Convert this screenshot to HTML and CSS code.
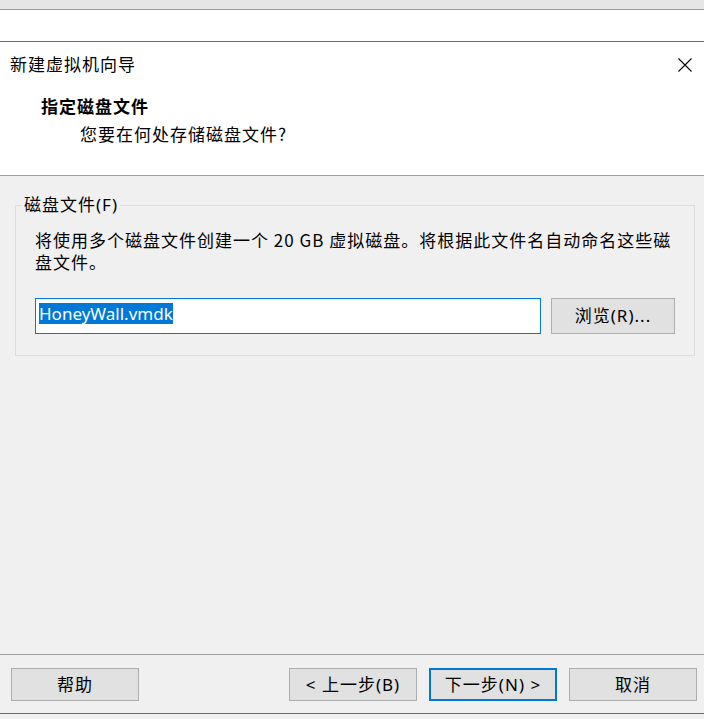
FILE: index.html
```html
<!DOCTYPE html>
<html lang="zh-CN">
<head>
<meta charset="utf-8">
<title>新建虚拟机向导</title>
<link rel="stylesheet" href="styles.css">
</head>
<body>
<div class="topbar"></div>
<div class="blank"></div>
<div class="header">
  <div class="title-row">
    <span class="title cjk">新建虚拟机向导</span>
    <svg class="close" width="14" height="14" viewBox="0 0 14 14"><path d="M0.5 0.5 L13.5 13.5 M13.5 0.5 L0.5 13.5" stroke="#000" stroke-width="1.1" fill="none"/></svg>
  </div>
  <div class="heading cjk">指定磁盘文件</div>
  <div class="subheading cjk">您要在何处存储磁盘文件?</div>
</div>
<div class="body">
  <fieldset class="group">
    <legend class="legend cjk">磁盘文件(F)</legend>
    <p class="desc cjk">将使用多个磁盘文件创建一个 20 GB 虚拟磁盘。将根据此文件名自动命名这些磁盘文件。</p>
    <div class="file-row">
      <div class="input"><span class="sel">HoneyWall.vmdk</span></div>
      <div class="btn browse cjk">浏览(R)...</div>
    </div>
  </fieldset>
</div>
<div class="footer">
  <div class="btn cjk">帮助</div>
  <div class="spacer"></div>
  <div class="btn cjk">&lt; 上一步(B)</div>
  <div class="btn primary cjk">下一步(N) &gt;</div>
  <div class="btn cjk">取消</div>
</div>
<div class="bottom"></div>
</body>
</html>
```

FILE: styles.css
```css
* { box-sizing: border-box; }
html, body { margin: 0; padding: 0; }
body {
  width: 704px;
  height: 719px;
  overflow: hidden;
  background: #f0f0f0;
  font-family: "Noto Sans", "Noto Sans CJK SC", sans-serif;
  font-size: 17px;
  color: #000;
  display: flex;
  flex-direction: column;
}
.cjk { letter-spacing: 1px; }
.topbar {
  height: 10px;
  background: #e6e6e6;
  border-bottom: 1px solid #78a4c6;
}
.blank {
  height: 32px;
  background: #fff;
  border-bottom: 1px solid #6a6a6a;
}
.header {
  height: 134px;
  background: #fff;
  border-bottom: 1px solid #a0a0a0;
  display: flex;
  flex-direction: column;
}
.title-row {
  display: flex;
  align-items: center;
  justify-content: space-between;
  padding: 11px 12px 0 10px;
  height: 33px;
}
.title { line-height: 22px; font-family: "Noto Sans CJK SC", sans-serif; }
.close { display: block; margin-top: 1px; }
.heading {
  margin: 20px 0 0 41px;
  font-weight: bold;
  line-height: 22px;
  font-family: "Noto Sans CJK SC", sans-serif;
}
.subheading {
  margin: 6px 0 0 80px;
  line-height: 22px;
  font-family: "Noto Sans CJK SC", sans-serif;
}
.body {
  flex: 0 0 479px;
  border-bottom: 1px solid #a0a0a0;
  padding: 18px 10px 0 15px;
}
.group {
  margin: 0;
  width: 680px;
  border: 1px solid #dcdcdc;
  padding: 13px 19px 21px 19px;
}
.legend {
  padding: 0 2px;
  margin-left: -13px;
  line-height: 22px;
}
.desc {
  margin: 0;
  line-height: 22px;
  font-family: "Noto Sans CJK SC", sans-serif;
}
.file-row {
  margin-top: 25px;
  display: flex;
  gap: 10px;
}
.input {
  flex: 0 0 506px;
  height: 36px;
  background: #fff;
  border: 1px solid #0078d7;
  padding: 3px 0 0 3px;
}
.sel {
  display: inline-block;
  background: #0078d7;
  color: #fff;
  height: 21px;
  line-height: 21px;
}
.btn {
  flex: 0 0 128px;
  height: 33px;
  background: #e1e1e1;
  border: 1px solid #adadad;
  display: flex;
  align-items: center;
  justify-content: center;
  line-height: 22px;
}
.browse {
  flex: 0 0 124px;
  height: 36px;
}
.primary {
  border: 2px solid #0078d7;
}
.footer {
  height: 59px;
  display: flex;
  gap: 12px;
  padding: 13px 7px 0 11px;
  border-bottom: 1px solid #6a6a6a;
}
.spacer { flex: 1; }
.bottom {
  flex: 1;
  background: #f0f0f0;
}
```
